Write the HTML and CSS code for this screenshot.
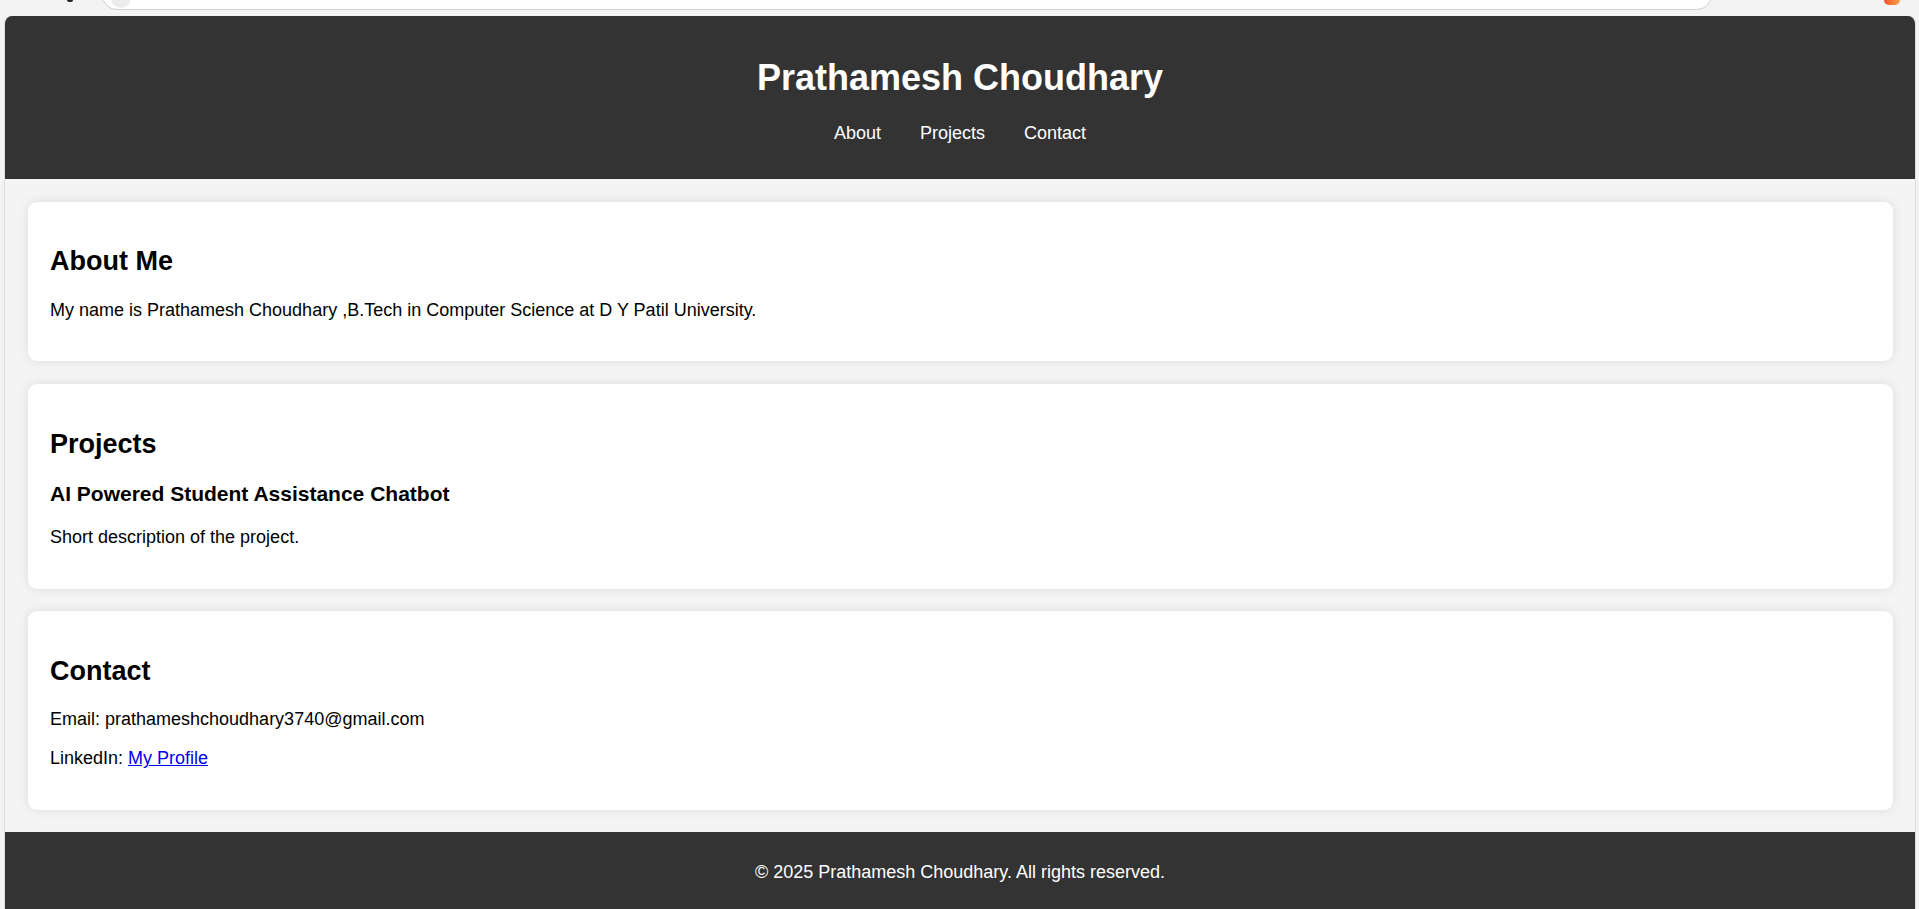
FILE: index.html
```html
<!DOCTYPE html>
<html lang="en">
<head>
<meta charset="UTF-8">
<title>Prathamesh Choudhary</title>
<link rel="stylesheet" href="styles.css">
</head>
<body>
<div class="chrome">
  <div class="chrome-glyph"></div>
  <div class="address-bar"><span class="site-dot"></span></div>
  <div class="chrome-icon"></div>
</div>
<div class="viewport">
  <header class="site-header">
    <h1 class="site-title">Prathamesh Choudhary</h1>
    <nav>
      <ul class="nav-list">
        <li><a href="#about">About</a></li>
        <li><a href="#projects">Projects</a></li>
        <li><a href="#contact">Contact</a></li>
      </ul>
    </nav>
  </header>
  <main>
    <section id="about" class="card">
      <h2>About Me</h2>
      <p>My name is Prathamesh Choudhary ,B.Tech in Computer Science at D Y Patil University.</p>
    </section>
    <section id="projects" class="card">
      <h2>Projects</h2>
      <div class="project">
        <h3>AI Powered Student Assistance Chatbot</h3>
        <p>Short description of the project.</p>
      </div>
    </section>
    <section id="contact" class="card">
      <h2>Contact</h2>
      <p>Email: prathameshchoudhary3740@gmail.com</p>
      <p>LinkedIn: <a class="link" href="#">My Profile</a></p>
    </section>
  </main>
  <footer class="site-footer">
    <p>&copy; 2025 Prathamesh Choudhary. All rights reserved.</p>
  </footer>
</div>
</body>
</html>
```
FILE: styles.css
```css
html, body {
  margin: 0;
  padding: 0;
  height: 909px;
  overflow: hidden;
}

body {
  background: #f3f3f3;
  font-family: "Liberation Sans", Arial, sans-serif;
  font-size: 18px;
  color: #000;
  display: flex;
  flex-direction: column;
}

.chrome {
  height: 16px;
  flex: none;
  display: flex;
  align-items: flex-start;
  position: relative;
}

.chrome-glyph {
  width: 6px;
  height: 2px;
  margin-left: 67px;
  background: #222;
  border-radius: 0 0 3px 3px;
}

.address-bar {
  margin-left: 29px;
  width: 1610px;
  height: 30px;
  margin-top: -20px;
  background: #fff;
  border: 1px solid #cfcfcf;
  border-radius: 15px;
  box-sizing: border-box;
  display: flex;
  align-items: flex-end;
}

.site-dot {
  width: 20px;
  height: 20px;
  margin-left: 8px;
  margin-bottom: 1px;
  background: #ececec;
  border-radius: 50%;
}

.chrome-icon {
  margin-left: 172px;
  width: 16px;
  height: 5px;
  background: linear-gradient(90deg, #f0502a, #f9a24a);
  border-radius: 0 0 8px 8px;
}

.viewport {
  flex: 1;
  margin: 0 3px 0 4px;
  border-left: 1px solid #dcdcdc;
  border-right: 1px solid #dcdcdc;
  border-radius: 8px 8px 0 0;
  background: #f4f4f4;
  overflow: hidden;
}

.site-header {
  background: #333;
  color: #fff;
  text-align: center;
  padding: 17px 0 17px;
}

.site-title {
  font-size: 36px;
  font-weight: bold;
  margin: 24px 0;
}

.nav-list {
  list-style: none;
  margin: 18px 0;
  padding: 0;
  display: flex;
  justify-content: center;
  gap: 39px;
}

.nav-list a {
  color: #fff;
  text-decoration: none;
}

main {
  display: block;
}

.card {
  background: #fff;
  margin: 22.5px;
  padding: 22.5px;
  border-radius: 9px;
  box-shadow: 0 0 11px rgba(0, 0, 0, 0.1);
}

.card h2 {
  font-size: 27px;
  margin: 22.4px 0;
}

.card h3 {
  font-size: 21px;
  margin: 21px 0;
}

.card p {
  margin: 18px 0;
}

.link {
  color: #0000ee;
}

.site-footer {
  background: #333;
  color: #fff;
  text-align: center;
  padding: 11.25px;
}

.site-footer p {
  margin: 18px 0;
}
```
